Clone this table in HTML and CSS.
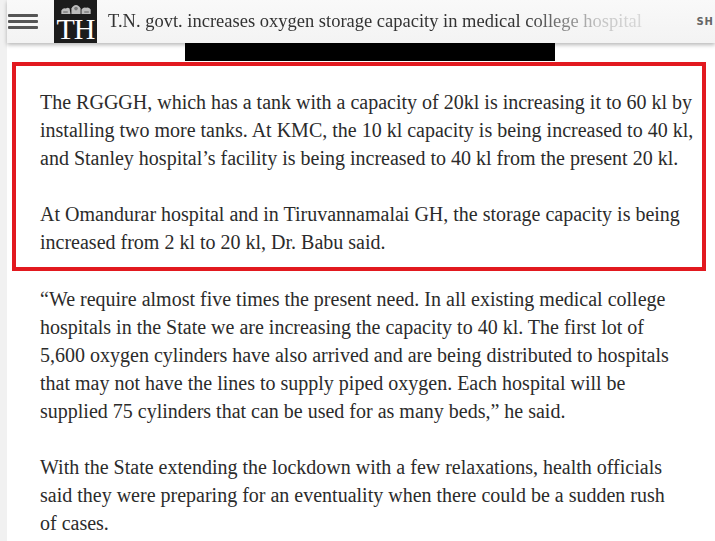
FILE: index.html
```html
<!DOCTYPE html>
<html lang="en">
<head>
<meta charset="utf-8">
<title>T.N. govt. increases oxygen storage capacity</title>
<link rel="stylesheet" href="styles.css">
</head>
<body>
<div class="page">
  <header class="topbar">
    <div class="menu" aria-label="Menu">
      <span></span><span></span><span></span>
    </div>
    <div class="logo">
      <svg class="crest" width="34" height="12" viewBox="0 0 34 12">
        <g fill="#bdbdbd">
          <path d="M1 11 L1 7 Q3 4 6 5 Q8 3 10 5 L11 11 Z"/>
          <path d="M12 11 L12 5 Q14 1 17 1 Q20 1 22 5 L22 11 Z"/>
          <path d="M23 11 L23 6 Q25 3 28 4 Q31 3 33 6 L33 11 Z"/>
        </g>
        <g fill="#7a7a7a">
          <circle cx="17" cy="5" r="2"/>
          <rect x="3" y="8" width="5" height="1.5"/>
          <rect x="26" y="8" width="5" height="1.5"/>
        </g>
      </svg>
      <span class="th">TH</span>
    </div>
    <h1 class="headline">T.N. govt. increases oxygen storage capacity in medical college hospitals</h1>
    <span class="share">SH</span>
  </header>
  <div class="redact"></div>
  <article class="story">
    <div class="highlight">
      <p>The RGGGH, which has a tank with a capacity of 20kl is increasing it to 60 kl by<br>installing two more tanks. At KMC, the 10 kl capacity is being increased to 40 kl,<br>and Stanley hospital’s facility is being increased to 40 kl from the present 20 kl.</p>
      <p>At Omandurar hospital and in Tiruvannamalai GH, the storage capacity is being<br>increased from 2 kl to 20 kl, Dr. Babu said.</p>
    </div>
    <div class="body">
      <p>“We require almost five times the present need. In all existing medical college<br>hospitals in the State we are increasing the capacity to 40 kl. The first lot of<br>5,600 oxygen cylinders have also arrived and are being distributed to hospitals<br>that may not have the lines to supply piped oxygen. Each hospital will be<br>supplied 75 cylinders that can be used for as many beds,” he said.</p>
      <p>With the State extending the lockdown with a few relaxations, health officials<br>said they were preparing for an eventuality when there could be a sudden rush<br>of cases.</p>
    </div>
  </article>
</div>
</body>
</html>
```
FILE: styles.css
```css
html, body {
  margin: 0;
  padding: 0;
}
body {
  background: #f1f1f1;
  height: 541px;
  overflow: hidden;
}
.page {
  margin-left: 7px;
  background: #ffffff;
  min-height: 541px;
}
.topbar {
  height: 43px;
  display: flex;
  align-items: center;
  background: linear-gradient(#f9f9f9, #f3f3f3);
  box-shadow: 0 2px 4px rgba(0,0,0,0.28);
  position: relative;
  z-index: 2;
}
.menu {
  width: 30px;
  margin-left: 1px;
  display: flex;
  flex-direction: column;
  gap: 3px;
  margin-top: -1px;
}
.menu span {
  display: block;
  height: 3px;
  background: #555555;
  border-radius: 1px;
}
.logo {
  width: 43px;
  height: 43px;
  margin-left: 16px;
  background: #1c1c1c;
  display: flex;
  flex-direction: column;
  align-items: center;
  flex-shrink: 0;
}
.crest {
  margin-top: 4px;
  display: block;
}
.th {
  font-family: "Liberation Serif", "Times New Roman", serif;
  color: #ffffff;
  font-size: 30px;
  line-height: 28px;
  letter-spacing: -1px;
}
.headline {
  margin: 0 0 0 11px;
  font-family: "Liberation Serif", "Times New Roman", serif;
  font-weight: normal;
  font-size: 18.5px;
  color: #333333;
  white-space: nowrap;
  width: 534px;
  overflow: hidden;
  -webkit-mask-image: linear-gradient(to right, #000 78%, rgba(0,0,0,0.25) 92%, rgba(0,0,0,0.15) 100%);
  mask-image: linear-gradient(to right, #000 78%, rgba(0,0,0,0.25) 92%, rgba(0,0,0,0.15) 100%);
}
.share {
  margin-left: auto;
  font-family: "DejaVu Sans", sans-serif;
  font-weight: bold;
  font-size: 10px;
  letter-spacing: 1px;
  color: #666666;
  padding-right: 1px;
}
.redact {
  width: 370px;
  height: 18px;
  margin-left: 178px;
  background: #000000;
}
.story {
  font-family: "Liberation Serif", "Times New Roman", serif;
  font-size: 20px;
  line-height: 28px;
  color: #2b2b2b;
}
.story p {
  margin: 0;
  white-space: nowrap;
}
.story p + p {
  margin-top: 28px;
}
.highlight {
  margin: 1px 9px 0 5px;
  border: 4px solid #e2191f;
  padding: 22px 10px 11px 24px;
}
.body {
  padding: 14px 0 0 33px;
}
```
